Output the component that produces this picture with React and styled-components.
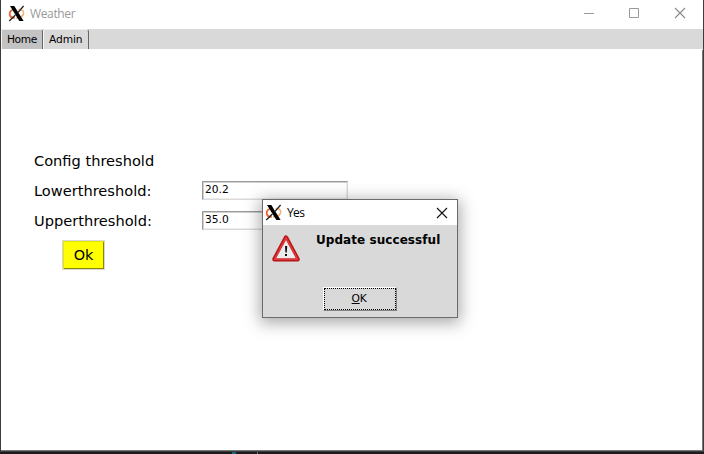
import React from "react";
import styled, { createGlobalStyle } from "styled-components";

const Global = createGlobalStyle`
  * { box-sizing: border-box; }
  body { margin: 0; overflow: hidden; font-family: "DejaVu Sans", sans-serif; color: #000; }
`;

const Desktop = styled.div`
  position: relative;
  display: flex;
  flex-direction: column;
  width: 704px;
  height: 454px;
  background: #1b1b1c;
`;
const Window = styled.main`
  display: flex;
  flex-direction: column;
  height: 452px;
  background: #fff;
  border: solid #3c3c3c;
  border-width: 0 1px 1px;
`;
const TitleBar = styled.header`
  display: flex;
  align-items: center;
  height: 29px;
  flex: none;
  padding: 0 17px 3px 7px;
`;
const Title = styled.h1`
  flex: 1;
  margin: 2px 0 0 5px;
  font: 400 12px/20px "Open Sans", "Noto Sans", sans-serif;
  letter-spacing: -0.35px;
  color: #9a9a9a;
`;
const Controls = styled.div`
  display: flex;
  gap: 34px;
`;
const Tabs = styled.nav`
  display: flex;
  height: 20px;
  flex: none;
  background: #d9d9d9;
`;
const Tab = styled.div`
  width: ${(p) => p.$width}px;
  height: 20px;
  padding-left: 5px;
  font-size: 10.67px;
  line-height: 20px;
  letter-spacing: ${(p) => p.$spacing}px;
  background: ${(p) => (p.$active ? "#d9d9d9" : "#c3c3c3")};
  border: solid;
  border-width: 1px 1px 0 1px;
  border-color: #eee #666 #666 #f4f4f4;
  border-radius: 2px 3px 0 0;
`;
const Page = styled.section`
  flex: 1;
  margin-top: 1px;
  padding: 96px 0 0 33px;
  border: solid #777;
  border-width: 0 1px 1px 0;
  font-size: 14.6px;
`;
const FormRow = styled.div`
  display: grid;
  grid-template-columns: 168px 146px;
  height: 30px;
  padding-bottom: 2px;
  align-items: center;
`;
const Entry = styled.div`
  height: 19px;
  padding-left: 2px;
  border: 1px solid;
  border-color: #9a9a9a #d9d9d9 #d9d9d9 #9a9a9a;
  box-shadow: inset 1px 1px #d0d0d0, inset -1px -1px #ededed;
  font-size: 10.67px;
  line-height: 16px;
`;
const YellowButton = styled.button`
  display: block;
  width: 43px;
  height: 30px;
  margin: 4px 0 0 28px;
  padding: 0;
  border: 1px solid #d9d9d9;
  background: #ff0;
  box-shadow: inset 1px 1px #e4e400, inset -1px -1px #888800;
  font: 14.4px "DejaVu Sans", sans-serif;
  color: #000;
`;
const Dialog = styled.section`
  position: absolute;
  left: 262px;
  top: 199px;
  display: flex;
  flex-direction: column;
  width: 196px;
  height: 119px;
  border: 1px solid #6b6b6b;
  background: #d9d9d9;
  box-shadow: 0 3px 15px 2px rgba(0, 0, 0, 0.34);
`;
const DialogBar = styled.header`
  display: flex;
  align-items: center;
  height: 25px;
  padding: 0 9px 0 2px;
  background: #fff;
`;
const DialogTitle = styled.h2`
  flex: 1;
  margin: 0 0 0 5px;
  font: 400 12px/20px "Open Sans", "Noto Sans", sans-serif;
  letter-spacing: -0.6px;
`;
const Message = styled.div`
  display: flex;
  height: 62px;
  padding: 8px 0 0 8px;
  gap: 15px;
`;
const MessageText = styled.strong`
  font-size: 12px;
  line-height: 14px;
  letter-spacing: 0.06px;
  white-space: nowrap;
`;
const OkButton = styled.button`
  width: 74px;
  height: 24px;
  margin-left: 60px;
  padding: 0 2px 1px 0;
  background: #d9d9d9;
  border: 1px solid;
  border-color: #fff #828282 #828282 #fff;
  outline: 1px dotted #000;
  outline-offset: -2px;
  font: 10.67px "DejaVu Sans", sans-serif;
  letter-spacing: -0.3px;
  color: #000;
`;
const Strip = styled.div`
  display: flex;
  height: 2px;
  gap: 21px;
  padding-left: 232px;
`;
const Spark = styled.i`
  width: ${(p) => p.$width}px;
  background: ${(p) => p.$color};
`;
const Icon = styled.svg`
  display: block;
  flex: none;
`;

const XLogo = () => (
  <Icon width="17" height="17" viewBox="0 0 17 17" fill="none">
    <path d="M5.5 4.6C2.4 5.3 1.2 7.6 1.8 10 2.4 12.3 4.4 13.1 6.8 12.8" stroke="#ea6a38" strokeWidth="1.9" />
    <path d="M10.5 4.4C14 4.2 16 6 15.6 8.5 15.1 11.2 12 12.8 8 13" stroke="#f3b272" strokeWidth="1.5" />
    <path d="M2 1H6.3L15.6 16H11.3Z" fill="#000" />
    <path d="M15.6 1 9.4 8.1M7.4 10 1.2 16" stroke="#222" strokeWidth="1.3" />
  </Icon>
);
const Close = ({ color }) => (
  <Icon width="12" height="12" viewBox="0 0 12 12" stroke={color} strokeWidth="1.1">
    <path d="M1 1 11 11M11 1 1 11" />
  </Icon>
);
const Warning = () => (
  <Icon width="30" height="30" viewBox="0 0 30 30">
    <path d="M15 4.6 26.6 26.3H3.4Z" fill="#d01c20" stroke="#b81518" strokeWidth="4.4" strokeLinejoin="round" />
    <path d="M15 4.6 26.6 26.3H3.4Z" fill="none" stroke="#e23b3d" strokeWidth="1.4" strokeLinejoin="round" />
    <path d="M15 7 24.8 25.2H5.2Z" fill="#ececec" />
    <path d="M14 13h2.2l-.4 6.5h-1.4zM14 21h2v2h-2z" fill="#111" />
  </Icon>
);

export default function App() {
  return (
    <Desktop>
      <Global />
      <Window>
        <TitleBar>
          <XLogo />
          <Title>Weather</Title>
          <Controls>
            <Icon width="12" height="12" stroke="#999"><path d="M2 6.5H12" /></Icon>
            <Icon width="12" height="12" stroke="#999" fill="none"><path d="M1.5 1.5h9v9h-9z" /></Icon>
            <Close color="#888" />
          </Controls>
        </TitleBar>
        <Tabs>
          <Tab $width={42} $spacing={-0.4}>Home</Tab>
          <Tab $width={46} $spacing={-0.1} $active>Admin</Tab>
        </Tabs>
        <Page>
          <FormRow>Config threshold</FormRow>
          <FormRow>Lowerthreshold:<Entry>20.2</Entry></FormRow>
          <FormRow>Upperthreshold:<Entry>35.0</Entry></FormRow>
          <YellowButton>Ok</YellowButton>
        </Page>
      </Window>
      <Strip>
        <Spark $width={4} $color="#16667d" />
        <Spark $width={1} $color="#777" />
      </Strip>
      <Dialog>
        <DialogBar>
          <XLogo />
          <DialogTitle>Yes</DialogTitle>
          <Close color="#111" />
        </DialogBar>
        <Message>
          <Warning />
          <MessageText>Update successful</MessageText>
        </Message>
        <OkButton><u>O</u>K</OkButton>
      </Dialog>
    </Desktop>
  );
}
